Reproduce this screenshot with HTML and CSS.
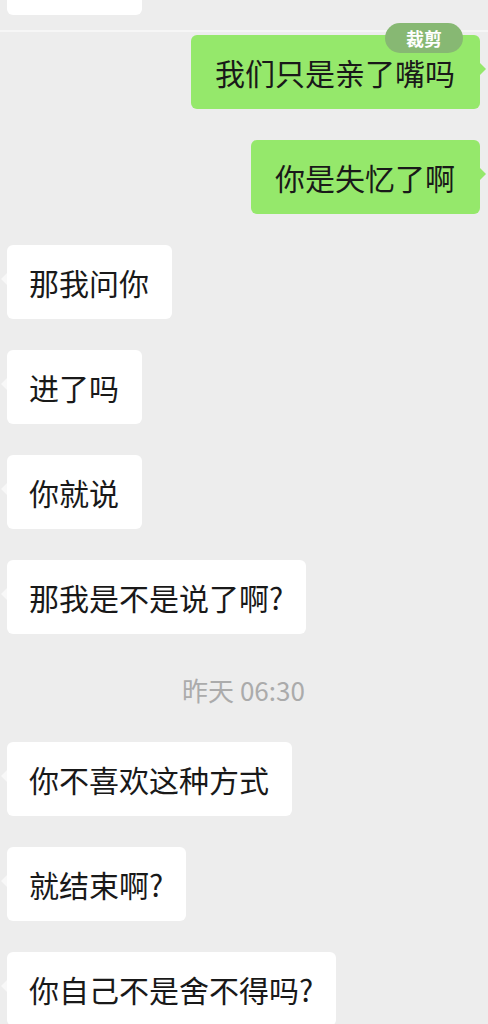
FILE: index.html
```html
<!DOCTYPE html>
<html lang="zh-CN">
<head>
    <meta charset="UTF-8">
    <meta name="viewport" content="width=device-width, initial-scale=1.0">
    <title>聊天记录</title>
    <link rel="stylesheet" href="styles.css">
</head>
<body>
    <div class="chat">
        <!-- 上一条消息的尾部 -->
        <div class="prev-bubble"></div>
        <div class="divider"></div>

        <div class="messages">
            <div class="row row-right">
                <div class="bubble bubble-green">
                    我们只是亲了嘴吗
                    <span class="badge">裁剪</span>
                </div>
            </div>
            <div class="row row-right">
                <div class="bubble bubble-green">你是失忆了啊</div>
            </div>
            <div class="row row-left">
                <div class="bubble bubble-white">那我问你</div>
            </div>
            <div class="row row-left">
                <div class="bubble bubble-white">进了吗</div>
            </div>
            <div class="row row-left">
                <div class="bubble bubble-white">你就说</div>
            </div>
            <div class="row row-left">
                <div class="bubble bubble-white">那我是不是说了啊?</div>
            </div>

            <div class="time">昨天 06:30</div>

            <div class="row row-left">
                <div class="bubble bubble-white">你不喜欢这种方式</div>
            </div>
            <div class="row row-left">
                <div class="bubble bubble-white">就结束啊?</div>
            </div>
            <div class="row row-left">
                <div class="bubble bubble-white">你自己不是舍不得吗?</div>
            </div>
        </div>
    </div>
</body>
</html>
```

FILE: styles.css
```css
/* 聊天界面 */
body {
    margin: 0;
    background-color: #ededed;
    font-family: "Noto Sans CJK SC", "Noto Sans", sans-serif;
    color: #191919;
    overflow: hidden;
}
.chat {
    display: flex;
    flex-direction: column;
}
.prev-bubble {
    width: 135px;
    height: 15px;
    margin-left: 7px;
    background-color: #fff;
    border-radius: 0 0 6px 6px;
}
.divider {
    height: 2px;
    margin-top: 15px;
    background-color: #f6f6f6;
}
.messages {
    display: flex;
    flex-direction: column;
    gap: 31px;
    padding: 3px 8px 0 7px;
}
.row {
    display: flex;
}
.row-right {
    justify-content: flex-end;
}
.row-left {
    justify-content: flex-start;
}
.bubble {
    position: relative;
    font-size: 30px;
    line-height: 30px;
    padding: 22px 23px 22px 22px;
    border-radius: 6px;
    white-space: nowrap;
}
.bubble-green {
    background-color: #95e86b;
    padding: 22px 25px 22px 24px;
}
.bubble-white {
    background-color: #fff;
}
.bubble-green::after,
.bubble-white::after {
    content: "";
    position: absolute;
    top: 28px;
    border-top: 6px solid transparent;
    border-bottom: 6px solid transparent;
}
.bubble-green::after {
    right: -6px;
    border-left: 6px solid #95e86b;
}
.bubble-white::after {
    left: -6px;
    border-right: 6px solid #f8f8f8;
}
.badge {
    position: absolute;
    top: -12px;
    right: 17px;
    width: 78px;
    height: 30px;
    line-height: 30px;
    border-radius: 15px;
    background-color: #87b873;
    color: #fff;
    font-size: 18px;
    font-weight: bold;
    text-align: center;
}
.time {
    text-align: center;
    font-size: 26px;
    line-height: 28px;
    padding: 11px 0 7px;
    color: #ababab;
}
```
